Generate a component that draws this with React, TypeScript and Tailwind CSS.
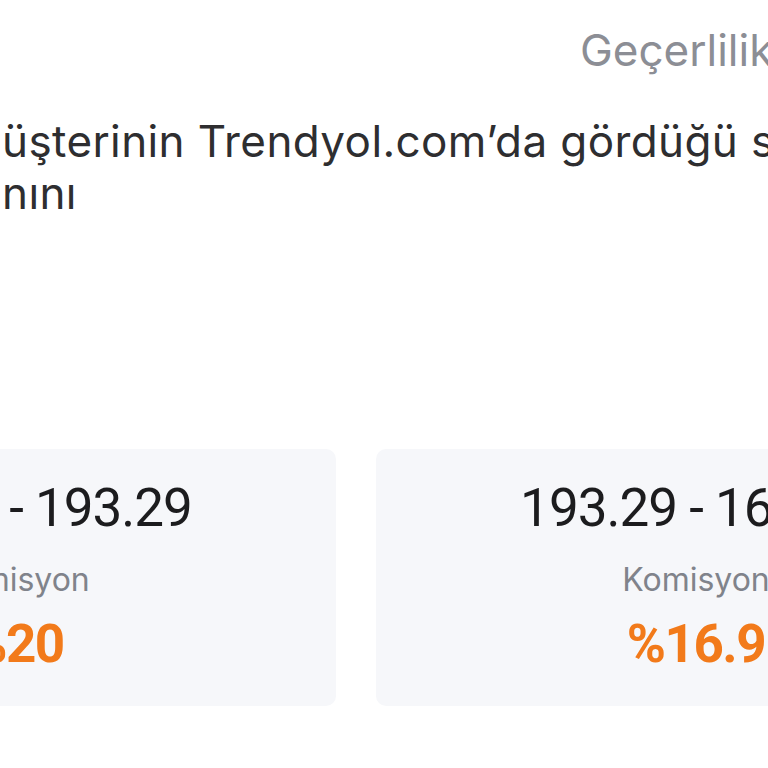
import React from "react";

const inter = { fontFamily: "Inter, 'Noto Sans', sans-serif" };
const roboto = { fontFamily: "Roboto, 'Noto Sans', sans-serif" };

function Card({ range, rate }: { range: string; rate: string }) {
  return (
    <div className="w-[640px] h-[257px] shrink-0 rounded-[10px] bg-[#f6f7fa] flex flex-col items-center pt-[29px]">
      <div className="text-[53px] leading-[60px] tracking-[-1px] text-[#1c1c1e] whitespace-nowrap" style={roboto}>
        {range}
      </div>
      <div className="mt-[22px] text-[32px] leading-[40px] text-[#80838b] whitespace-nowrap" style={inter}>
        Komisyon
      </div>
      <div className="mt-[14px] text-[53px] leading-[60px] font-bold tracking-[-1.5px] text-[#f27a1a] whitespace-nowrap" style={roboto}>
        {rate}
      </div>
    </div>
  );
}

export default function App() {
  return (
    <div className="w-[768px] h-[768px] overflow-hidden bg-white" style={inter}>
      <div className="pt-[24px] pl-[580px] text-[44px] leading-[52px] text-[#8c8e95] whitespace-nowrap">
        Geçerlilik Tarihi
      </div>
      <div className="mt-[39px] text-[44px] leading-[52px] tracking-[0.4px] text-[#2e2e30] whitespace-nowrap pl-[2px]">
        <div>
          <span className="relative">
            <span className="absolute right-full">Ürün satış fiyatı, m</span>
          </span>
          üşterinin Trendyol.com’da gördüğü satış fiyatı
        </div>
        <div>
          <span className="relative">
            <span className="absolute right-full">fiyat ekra</span>
          </span>
          nını
        </div>
      </div>
      <div className="mt-[230px] ml-[-304px] flex gap-[40px]">
        <Card range="237.46 - 193.29" rate="%20" />
        <Card range="193.29 - 164.73" rate="%16.9" />
      </div>
    </div>
  );
}
